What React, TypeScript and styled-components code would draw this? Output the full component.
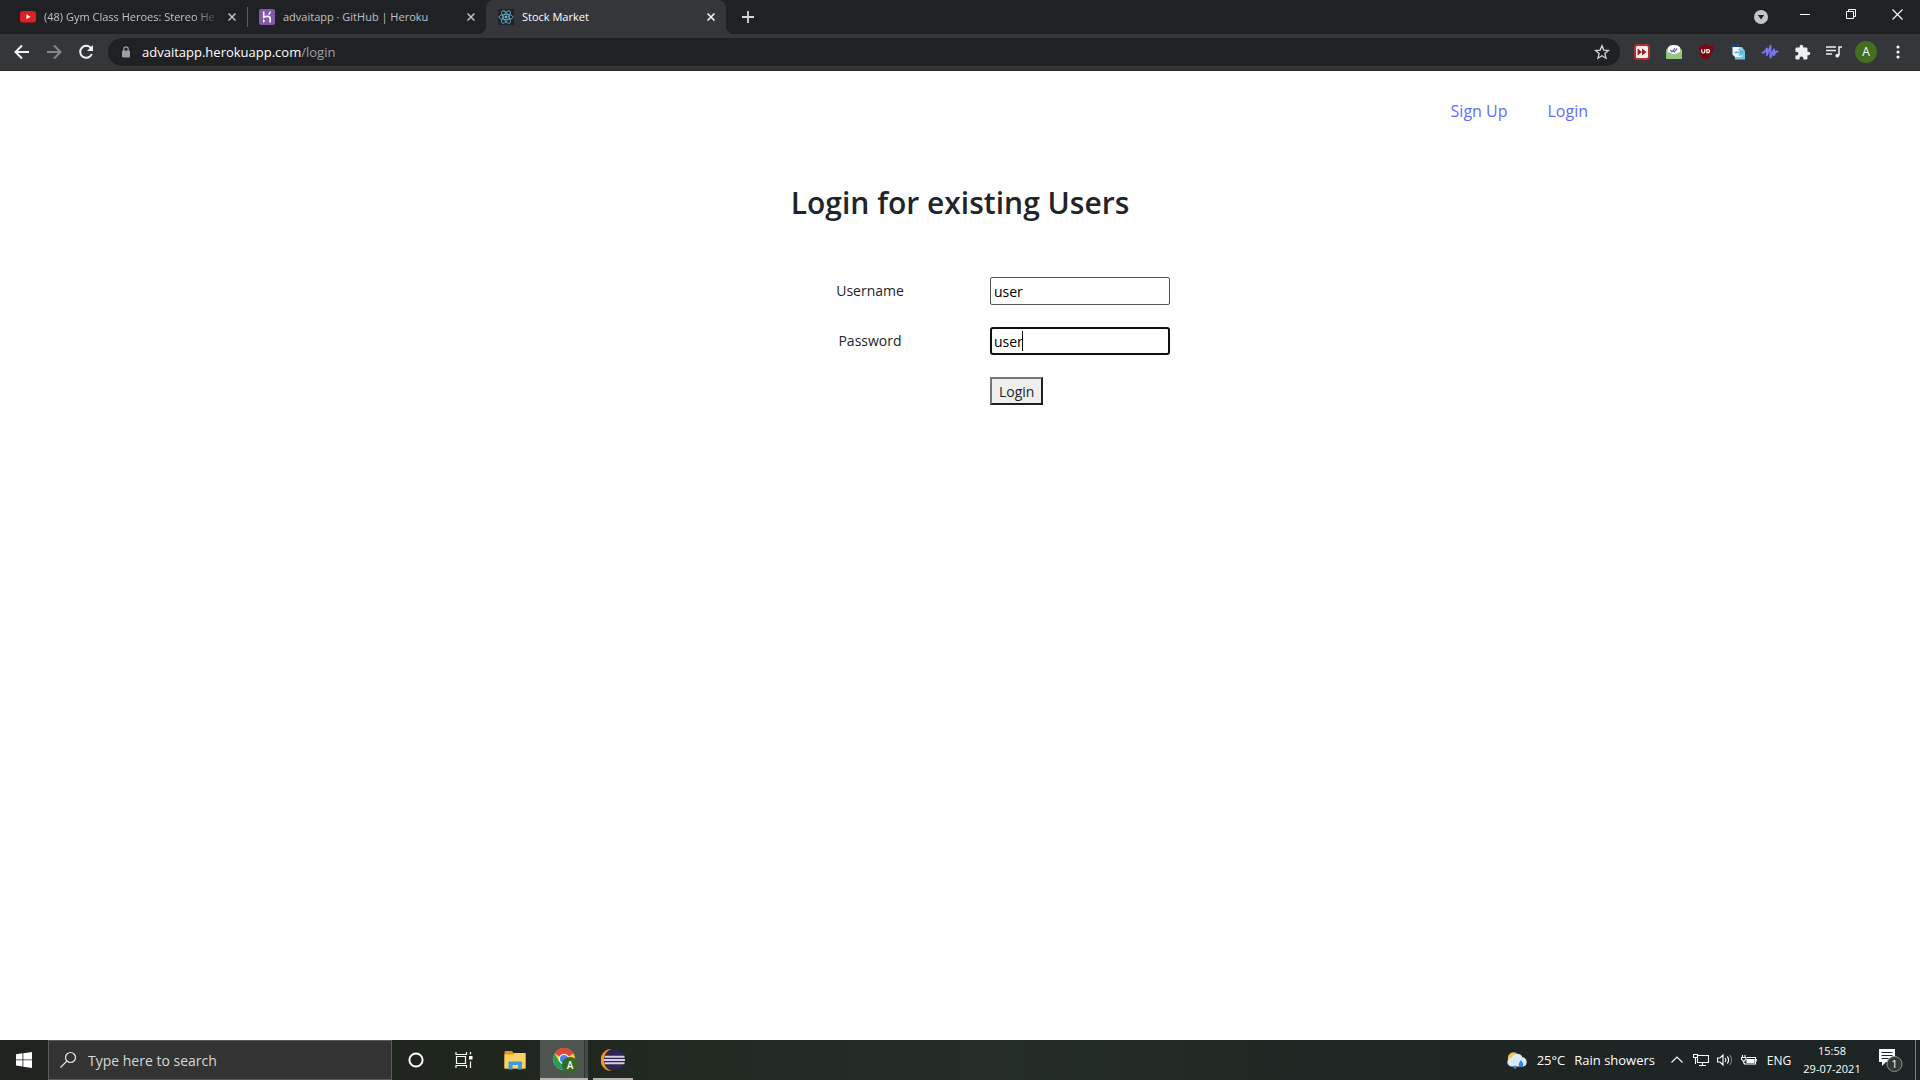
import React from 'react';
import styled, { createGlobalStyle } from 'styled-components';

const GlobalStyle = createGlobalStyle`
  *, *::before, *::after { box-sizing: border-box; }
  body { margin: 0; background: #fff; }
  body, button, input { font-family: 'Segoe UI', 'Open Sans', 'Noto Sans', sans-serif; }
  button { padding: 0; border: 0; background: none; color: inherit; }
  svg { display: block; flex: none; }
`;

const Screen = styled.div`
  display: flex;
  flex-direction: column;
  height: 100vh;
  overflow: hidden;
`;

/* ---------- browser frame ---------- */

const TabStrip = styled.header`
  display: flex;
  height: 34px;
  flex: none;
  padding-left: 8px;
  background: #202124;
  color: #dee1e6;
`;

const Tab = styled.div<{ $active?: boolean; $divider?: boolean }>`
  position: relative;
  display: flex;
  align-items: center;
  width: ${(p) => (p.$active ? 240 : 239)}px;
  height: 34px;
  padding: 0 7px 0 12px;
  border-radius: 8px 8px 0 0;
  background: ${(p) => (p.$active ? '#35363a' : 'transparent')};
  color: ${(p) => (p.$active ? '#fff' : '#bfc2c7')};
  &::before {
    content: '';
    display: ${(p) => (p.$active ? 'block' : 'none')};
    position: absolute;
    left: -8px;
    bottom: 0;
    width: 8px;
    height: 8px;
    background: radial-gradient(circle at 0 0, transparent 8px, #35363a 8px);
  }
  &::after {
    content: '';
    display: ${(p) => (p.$active || p.$divider ? 'block' : 'none')};
    position: absolute;
    left: ${(p) => (p.$active ? '240px' : '239px')};
    bottom: ${(p) => (p.$active ? '0' : '7px')};
    width: ${(p) => (p.$active ? '8px' : '1px')};
    height: ${(p) => (p.$active ? '8px' : '20px')};
    background: ${(p) =>
      p.$active ? 'radial-gradient(circle at 100% 0, transparent 8px, #35363a 8px)' : '#5c5e62'};
  }
`;

const TabTitle = styled.span<{ $fade?: boolean }>`
  flex: 1;
  min-width: 0;
  margin: 0 4px 0 8px;
  white-space: nowrap;
  font-size: 11px;
  line-height: 16px;
  mask-image: ${(p) => (p.$fade ? 'linear-gradient(to right, #000 85%, transparent)' : 'none')};
`;

const IconButton = styled.button<{ $w?: number; $h?: number }>`
  display: flex;
  align-items: center;
  justify-content: center;
  flex: none;
  width: ${(p) => p.$w ?? 32}px;
  height: ${(p) => p.$h ?? 28}px;
`;

const WindowControls = styled.div`
  display: flex;
  margin-left: auto;
  color: #fff;
`;

const Toolbar = styled.div`
  display: flex;
  align-items: center;
  flex: none;
  height: 37px;
  padding: 0 6px;
  border-bottom: 1px solid #2b2526;
  background: #35363a;
  color: #f1f3f4;
`;

const AddressBar = styled.div`
  display: flex;
  align-items: center;
  flex: 1;
  height: 28px;
  margin: 0 6px;
  padding-left: 12px;
  padding-right: 2px;
  border-radius: 14px;
  background: #202124;
`;

const Address = styled.span`
  flex: 1;
  margin-left: 10px;
  color: #fff;
  font-size: 13px;
  line-height: 20px;
`;

const Dim = styled.span`
  color: #9aa0a6;
`;

const Avatar = styled.span`
  display: grid;
  place-items: center;
  width: 22px;
  height: 22px;
  border-radius: 50%;
  background: #43701f;
  color: #fff;
  font-size: 12px;
  line-height: 22px;
`;

/* ---------- page ---------- */

const Page = styled.main`
  display: flex;
  flex-direction: column;
  align-items: center;
  flex: 1;
  min-height: 0;
  background: #fff;
  color: #212529;
`;

const Nav = styled.nav`
  display: flex;
  justify-content: flex-end;
  gap: 40px;
  width: 100%;
  max-width: 1320px;
  padding: 28px 32px;
`;

const NavLink = styled.a`
  color: #646cff;
  font-size: 16px;
  line-height: 24px;
  text-decoration: none;
`;

const Heading = styled.h2`
  margin: 32px 0 54px;
  font-size: 30px;
  line-height: 40px;
  font-weight: 600;
`;

const Form = styled.form`
  display: grid;
  grid-template-columns: 240px 180px;
  row-gap: 22px;
  font-size: 14px;
`;

const Label = styled.label`
  text-align: center;
  line-height: 28px;
`;

const Field = styled.div`
  position: relative;
  display: flex;
`;

const TextInput = styled.input<{ $focused?: boolean }>`
  width: 180px;
  height: 28px;
  padding: 0 ${(p) => (p.$focused ? 2 : 3)}px;
  border: ${(p) => (p.$focused ? '2px solid #101010' : '1px solid #555')};
  border-radius: ${(p) => (p.$focused ? 3 : 2)}px;
  outline: none;
  background: #fff;
  color: #000;
  font-size: 14px;
`;

const Caret = styled.span`
  position: absolute;
  left: 32px;
  top: 4px;
  width: 1px;
  height: 20px;
  background: #000;
`;

const Submit = styled.button`
  grid-column: 2;
  justify-self: start;
  height: 28px;
  padding: 0 7px;
  border: 2px solid;
  border-color: #767676 #212121 #212121 #767676;
  background: #efefef;
  color: #212529;
  font-size: 14px;
`;

/* ---------- taskbar ---------- */

const Taskbar = styled.footer`
  display: flex;
  align-items: stretch;
  flex: none;
  height: 40px;
  background: linear-gradient(to right, #1f231d, #20271f 30%, #242e27 52%, #1f2623 70%, #1d2425);
  color: #fff;
`;

const SearchBox = styled.label`
  display: flex;
  align-items: center;
  gap: 11px;
  width: 344px;
  padding-left: 10px;
  border: 1px solid #5d5d5d;
  background: #333;
`;

const SearchInput = styled.input`
  flex: 1;
  min-width: 0;
  padding: 0;
  border: 0;
  outline: none;
  background: transparent;
  font-size: 14px;
  &::placeholder { color: #d8d8d8; opacity: 1; }
`;

const TaskButton = styled.button<{ $active?: boolean; $open?: boolean }>`
  display: flex;
  align-items: center;
  justify-content: center;
  width: 48px;
  border-bottom: 2px solid ${(p) => (p.$active || p.$open ? '#b5b3b0' : 'transparent')};
  border-top: 2px solid transparent;
  background: ${(p) =>
    p.$active ? 'linear-gradient(to right, #4e5550 44px, #303631 44px, #303631 45px, #454c46 45px)' : 'transparent'};
  background-clip: border-box;
  background-origin: border-box;
`;

const Apps = styled.div`
  display: flex;
  gap: 2px;
  padding-left: 2px;
`;

const EclipseButton = styled(TaskButton)`
  width: 40px;
  margin-left: 3px;
`;

const Tray = styled.div`
  display: flex;
  align-items: center;
  margin-left: auto;
  padding-right: 4px;
`;

const Weather = styled.div`
  display: flex;
  align-items: center;
  gap: 9px;
  margin-right: 10px;
  font-size: 13px;
`;

const Language = styled.span`
  width: 36px;
  text-align: center;
  font-size: 12px;
`;

const Clock = styled.time`
  width: 70px;
  text-align: center;
  font-size: 11px;
  line-height: 18px;
`;

const Notifications = styled.button`
  display: flex;
  align-items: center;
  justify-content: center;
  width: 49px;
  height: 40px;
  padding-right: 2px;
  border-right: 1px solid #77807b;
`;

const Close = () => (
  <svg width="8" height="8" viewBox="0 0 8 8" stroke="currentColor" strokeWidth="1.5">
    <path d="M.5.5l7 7M7.5.5l-7 7" />
  </svg>
);

const WinClose = () => (
  <svg width="11" height="11" viewBox="0 0 11 11" stroke="currentColor" strokeWidth="1.1">
    <path d="M.5.5l10 10M10.5.5l-10 10" />
  </svg>
);

const YouTube = () => (
  <svg width="16" height="16" viewBox="0 0 16 16">
    <rect y="2" width="16" height="11.5" rx="3" fill="#e02020" />
    <path d="M6.4 5.3l4.2 2.5-4.2 2.5z" fill="#fff" />
  </svg>
);

const Heroku = () => (
  <svg width="16" height="16" viewBox="0 0 16 16">
    <rect width="16" height="16" rx="2" fill="#8059a8" />
    <path d="M4.7 2.5v5.8c2-1 6.4-1.7 6.4 1v4.2M11.2 2.5c-.1 1.2-.7 2.2-1.5 3" fill="none" stroke="#fff" strokeWidth="1.6" />
    <path d="M4 10v4l2.300-2z" fill="#fff" />
  </svg>
);

const ReactLogo = () => (
  <svg width="16" height="16" viewBox="0 0 16 16" fill="none" stroke="#61a9c2" strokeWidth=".9">
    <rect width="16" height="16" rx="1" fill="#20232a" stroke="none" />
    <ellipse cx="8" cy="8" rx="7" ry="2.7" />
    <ellipse cx="8" cy="8" rx="7" ry="2.7" transform="rotate(60 8 8)" />
    <ellipse cx="8" cy="8" rx="7" ry="2.7" transform="rotate(120 8 8)" />
    <circle cx="8" cy="8" r="1.1" fill="#9be0f5" />
  </svg>
);

const Arrow = ({ flip }: { flip?: boolean }) => (
  <svg width="16" height="16" viewBox="0 0 16 16" fill="none" stroke={flip ? '#85868a' : '#f1f3f4'} strokeWidth="2">
    {flip ? <path d="M1 8h13M8 1.5L14.5 8 8 14.5" /> : <path d="M15 8H2M8 1.5L1.5 8 8 14.5" />}
  </svg>
);

const Reload = () => (
  <svg width="16" height="16" viewBox="0 0 16 16" fill="none" stroke="#f1f3f4" strokeWidth="2">
    <path d="M13 4.2A6 6 0 1 0 13.8 10" />
    <path d="M15 1v6H9z" fill="#f1f3f4" stroke="none" />
  </svg>
);

const Lock = () => (
  <svg width="12" height="12" viewBox="0 0 12 12">
    <rect x="2" y="4.5" width="8" height="7" rx="1" fill="#9aa0a6" />
    <path d="M3.8 5V3a2.2 2.2 0 0 1 4.4 0v2" fill="none" stroke="#9aa0a6" strokeWidth="1.2" />
  </svg>
);

const Star = () => (
  <svg width="16" height="16" viewBox="0 0 16 16" fill="none" stroke="#d5d7da" strokeWidth="1.3">
    <path d="M8 1.7l1.8 4.4 4.7.4-3.6 3.1 1.1 4.6L8 11.8l-4 2.4 1.1-4.6-3.6-3.1 4.7-.4z" />
  </svg>
);

const FastForward = () => (
  <svg width="16" height="16" viewBox="0 0 16 16">
    <rect x="1" y="1" width="14" height="14" rx="2.5" fill="#f6eeee" stroke="#b0302e" strokeWidth="2" />
    <path d="M3.6 4.4L8 8l-4.4 3.6zM8 4.4L12.4 8 8 11.6z" fill="#94201e" />
  </svg>
);

const MailCheck = () => (
  <svg width="16" height="16" viewBox="0 0 16 16">
    <path d="M0 6l4-4.5h8L16 6v8a1 1 0 0 1-1 1H1a1 1 0 0 1-1-1z" fill="#94c77d" />
    <path d="M2 3.500C3.500 1.800 5.500 1 8 1s4.500.8 6 2.500V8l-6 2.500L2 8z" fill="#fff" />
    <path d="M4.200 5.800l1.800 2 3-3.500M7.500 7l.8.8 3-3.500" fill="none" stroke="#6559b5" strokeWidth="1.2" />
  </svg>
);

const UBlock = () => (
  <svg width="16" height="16" viewBox="0 0 16 16">
    <path d="M8 .2c2 1.2 4.5 1.8 7 1.8 0 6.5-1 10.5-7 13.800C2 12.500 1 8.500 1 2 3.500 2 6 1.400 8 .2z" fill="#7a0710" />
    <path d="M3.800 5.200v2.300a1.500 1.500 0 0 0 3 0V5.200M8.800 5.700v3h1.200a1.500 1.500 0 0 0 0-3z" fill="none" stroke="#fff" strokeWidth="1.2" />
  </svg>
);

const ShareDoc = () => (
  <svg width="16" height="16" viewBox="0 0 16 16">
    <path d="M1 0h9v8H1z" fill="#1d4471" />
    <path d="M8 3h4l3 4v8.500H5V12z" fill="#71c5e4" />
    <path d="M2.500 3H9l2.500 2.500V13H5L2.500 10.500z" fill="#edf7fb" />
    <path d="M4.500 8.300h8M9 5l3.500 3.300L9 11.600" fill="none" stroke="#58b5dc" strokeWidth="1.7" />
  </svg>
);

const Wave = () => (
  <svg width="18" height="16" viewBox="0 0 18 16" fill="none" stroke="#7776ee" strokeWidth="2" strokeLinecap="round" strokeLinejoin="round">
    <path d="M1.500 8.500h1.500L6 4.500v6.500l3.500-9v11.500L13 5.500v5.500l2-3.500h1.500" />
  </svg>
);

const Puzzle = () => (
  <svg width="17" height="17" viewBox="0 0 24 24" fill="#eef0f2">
    <path d="M20.500 11H19V7a2 2 0 0 0-2-2h-4V3.500a2.500 2.500 0 0 0-5 0V5H4a2 2 0 0 0-2 2v3.800h1.500a2.700 2.700 0 0 1 0 5.400H2V20a2 2 0 0 0 2 2h3.800v-1.500a2.700 2.700 0 0 1 5.400 0V22H17a2 2 0 0 0 2-2v-4h1.500a2.500 2.500 0 0 0 0-5z" />
  </svg>
);

const MediaQueue = () => (
  <svg width="16" height="14" viewBox="0 0 16 14" fill="none" stroke="#eef0f2" strokeWidth="1.6">
    <path d="M0 2h10M0 5.500h10M0 9h6M16 2h-3v8.500" />
    <circle cx="11.300" cy="10.700" r="1.900" fill="#eef0f2" stroke="none" />
  </svg>
);

const Dots = () => (
  <svg width="4" height="14" viewBox="0 0 4 14" fill="#f1f3f4">
    <circle cx="2" cy="2" r="1.6" /><circle cx="2" cy="7" r="1.6" /><circle cx="2" cy="12" r="1.6" />
  </svg>
);

const Windows = () => (
  <svg width="16" height="16" viewBox="0 0 16 16" fill="#fff">
    <path d="M0 2.200l6.500-.9v6.200H0zM7.300 1.200L16 0v7.500H7.300zM0 8.300h6.500v6.200L0 13.600zM7.300 8.300H16V16l-8.700-1.300z" />
  </svg>
);

const SearchIcon = () => (
  <svg width="18" height="18" viewBox="0 0 18 18" fill="none" stroke="#e8e8e8" strokeWidth="1.2">
    <circle cx="11.500" cy="6.500" r="5" /><path d="M7.800 10.200L1.500 16.500" />
  </svg>
);

const TaskView = () => (
  <svg width="18" height="16" viewBox="0 0 18 16" fill="none" stroke="#fff" strokeWidth="1.2">
    <path d="M1.500 4.500h9v7h-9zM1 0v2.500h10.500V0M1 16v-2.500h10.500V16M15.500 0v2.500M15.500 9.500V16" />
    <path d="M14 4h3.500v3.500H14z" fill="#fff" stroke="none" />
  </svg>
);

const Folder = () => (
  <svg width="24" height="19" viewBox="-2 0 24 19">
    <path d="M.5 1a1 1 0 0 1 1-1H8l1.500 2h12v15.500H.5z" fill="#e09a12" />
    <path d="M.5 3.500h9l1-1.500h11v15.500H.5z" fill="#fcd266" />
    <path d="M4.500 18.500v-7a1 1 0 0 1 1-1h11.500a1 1 0 0 1 1 1v7h-4V14H8.500v4.500z" fill="#3f9be0" />
  </svg>
);

const Chrome = () => (
  <svg width="28" height="26" viewBox="-2 0 28 26">
    <circle cx="12" cy="12" r="11" fill="#f8c93e" />
    <path d="M2.500 6.500A11 11 0 0 1 21.500 6.500H12z" fill="#dc4a3d" />
    <path d="M12 12L2.500 6.500A11 11 0 0 1 21.500 6.500z" fill="#dc4a3d" />
    <path d="M2.500 6.500A11 11 0 0 0 12 23l5-8.500H7z" fill="#249d5c" />
    <circle cx="12" cy="12" r="5.200" fill="#fff" /><circle cx="12" cy="12" r="4" fill="#4285e8" />
    <circle cx="18" cy="18" r="8" fill="#356b24" />
    <text x="18" y="21.500" textAnchor="middle" fill="#fff" fontSize="10" fontFamily="Roboto, sans-serif" fontWeight="500">A</text>
  </svg>
);

const Eclipse = () => (
  <svg width="24" height="22" viewBox="0 0 24 22">
    <path d="M10.500 0A11 11 0 0 0 10.500 22 11.500 11.500 0 0 1 3 11 11.500 11.500 0 0 1 10.500 0z" fill="#f39323" />
    <circle cx="13.500" cy="11" r="10.200" fill="#2f2559" />
    <path d="M3.500 7.800h20M3 11h21M3.500 14.200h20" stroke="#d3cfdf" strokeWidth="2" />
  </svg>
);

const WeatherIcon = () => (
  <svg width="21" height="17" viewBox="0 0 21 17">
    <circle cx="6.500" cy="6" r="5.700" fill="#f8c348" />
    <path d="M5 14.500a4.500 4.500 0 0 1-.3-9A5.900 5.900 0 0 1 15.500 5.300 4.700 4.700 0 0 1 16.300 14.500z" fill="#dcebfb" />
    <path d="M14 8c2 3 2.300 3.700 2.300 4.700a2.300 2.300 0 0 1-4.600 0C11.700 11.700 12 11 14 8zM8 13c1 1.500 1.300 2 1.300 2.600a1.300 1.300 0 0 1-2.600 0C6.700 15 7 14.500 8 13z" fill="#2f86e0" />
  </svg>
);

const trayIcons = [
  { name: 'Show hidden icons', art: <path d="M2.500 10.500L8 5l5.500 5.500" /> },
  { name: 'Network', art: <path d="M5 3.500h10.500v7H4.500V6M9.500 10.500v3M6 13.500h7M.5 2.500h4v3h-4zM2.500 5.500v6.500" /> },
  { name: 'Volume', art: <><path d="M.5 6v4h2.500l3 3V3L3 6zM8 6a3 3 0 0 1 0 4M10.200 4.500a5 5 0 0 1 0 7" /><path d="M12.500 3a7 7 0 0 1 0 10" opacity=".4" /></> },
  { name: 'Battery', art: <><path d="M6 5.500h8.500v6.500H3.500v-1M14.500 7.500H16v2.500M1.500 3v2.500M4 3v2.500M.5 5.500h4.500v1.500L3.500 9H2L.5 7zM2.700 9v2.500" /><path d="M6 7.500h7v3H6z" fill="#fff" /></> },
];

const extensions = [
  { name: 'Fast forward', icon: <FastForward /> },
  { name: 'Mail tracker', icon: <MailCheck /> },
  { name: 'uBlock', icon: <UBlock /> },
  { name: 'Share', icon: <ShareDoc /> },
  { name: 'Wave', icon: <Wave /> },
  { name: 'Extensions', icon: <Puzzle /> },
  { name: 'Media controls', icon: <MediaQueue /> },
  { name: 'Profile', icon: <Avatar>A</Avatar> },
  { name: 'Menu', icon: <Dots /> },
];

const tabs = [
  { title: '(48) Gym Class Heroes: Stereo He', icon: <YouTube />, fade: true, divider: true },
  { title: 'advaitapp · GitHub | Heroku', icon: <Heroku /> },
  { title: 'Stock Market', icon: <ReactLogo />, active: true },
];

export default function App() {
  return (
    <Screen>
      <GlobalStyle />
      <TabStrip>
        {tabs.map((t) => (
          <Tab key={t.title} $active={t.active} $divider={t.divider}>
            {t.icon}
            <TabTitle $fade={t.fade}>{t.title}</TabTitle>
            <IconButton $w={16} $h={16} aria-label="Close tab"><Close /></IconButton>
          </Tab>
        ))}
        <IconButton $w={44} $h={34} aria-label="New tab">
          <svg width="12" height="12" viewBox="0 0 12 12" stroke="#d5d7da" strokeWidth="1.8"><path d="M6 0v12M0 6h12" /></svg>
        </IconButton>
        <WindowControls>
          <IconButton $w={42} $h={34} aria-label="Search tabs">
            <svg width="14" height="14" viewBox="0 0 14 14"><circle cx="7" cy="7" r="7" fill="#c3c5ca" /><path d="M3.800 5h6.400L7 9.500z" fill="#202124" /></svg>
          </IconButton>
          <IconButton $w={46} aria-label="Minimize">
            <svg width="10" height="1"><path d="M0 .5h10" stroke="#fff" /></svg>
          </IconButton>
          <IconButton $w={46} aria-label="Restore">
            <svg width="10" height="10" viewBox="0 0 10 10" fill="none" stroke="#fff"><path d="M.5 2.500h7v7h-7zM2.500 2V.5h7v7H8" /></svg>
          </IconButton>
          <IconButton $w={46} aria-label="Close"><WinClose /></IconButton>
        </WindowControls>
      </TabStrip>

      <Toolbar>
        <IconButton aria-label="Back"><Arrow /></IconButton>
        <IconButton aria-label="Forward"><Arrow flip /></IconButton>
        <IconButton aria-label="Reload"><Reload /></IconButton>
        <AddressBar>
          <Lock />
          <Address>advaitapp.herokuapp.com<Dim>/login</Dim></Address>
          <IconButton aria-label="Bookmark"><Star /></IconButton>
        </AddressBar>
        {extensions.map((e) => (
          <IconButton key={e.name} aria-label={e.name}>{e.icon}</IconButton>
        ))}
      </Toolbar>

      <Page>
        <Nav>
          <NavLink href="#signup">Sign Up</NavLink>
          <NavLink href="#login">Login</NavLink>
        </Nav>
        <Heading>Login for existing Users</Heading>
        <Form onSubmit={(e: React.FormEvent) => e.preventDefault()}>
          <Label htmlFor="username">Username</Label>
          <Field><TextInput id="username" defaultValue="user" /></Field>
          <Label htmlFor="password">Password</Label>
          <Field><TextInput id="password" $focused defaultValue="user" /><Caret /></Field>
          <Submit type="submit">Login</Submit>
        </Form>
      </Page>

      <Taskbar>
        <TaskButton aria-label="Start"><Windows /></TaskButton>
        <SearchBox>
          <SearchIcon />
          <SearchInput placeholder="Type here to search" aria-label="Search" />
        </SearchBox>
        <TaskButton aria-label="Cortana">
          <svg width="16" height="16" viewBox="0 0 16 16"><circle cx="8" cy="8" r="6.600" fill="none" stroke="#fff" strokeWidth="2" /></svg>
        </TaskButton>
        <TaskButton aria-label="Task view"><TaskView /></TaskButton>
        <Apps>
          <TaskButton aria-label="File Explorer"><Folder /></TaskButton>
          <TaskButton aria-label="Chrome" $active><Chrome /></TaskButton>
          <EclipseButton aria-label="Eclipse" $open><Eclipse /></EclipseButton>
        </Apps>
        <Tray>
          <Weather><WeatherIcon /><span>25°C</span><span>Rain showers</span></Weather>
          {trayIcons.map((t) => (
            <IconButton key={t.name} $w={24} aria-label={t.name}>
              <svg width="16" height="16" viewBox="0 0 16 16" fill="none" stroke="#fff" strokeWidth="1.1">{t.art}</svg>
            </IconButton>
          ))}
          <Language>ENG</Language>
          <Clock>15:58<br />29-07-2021</Clock>
          <Notifications aria-label="Notifications">
            <svg width="26" height="26" viewBox="0 0 26 26">
              <path d="M2 2h16v13H9l-4 4v-4H2z" fill="#fff" />
              <path d="M4.500 5.500h11M4.500 8.500h11M4.500 11.500h7" stroke="#20272a" />
              <circle cx="17.500" cy="17" r="7.500" fill="#333837" stroke="#8d9290" />
              <text x="17.500" y="21" textAnchor="middle" fill="#fff" fontSize="11" fontFamily="Open Sans, sans-serif">1</text>
            </svg>
          </Notifications>
        </Tray>
      </Taskbar>
    </Screen>
  );
}
